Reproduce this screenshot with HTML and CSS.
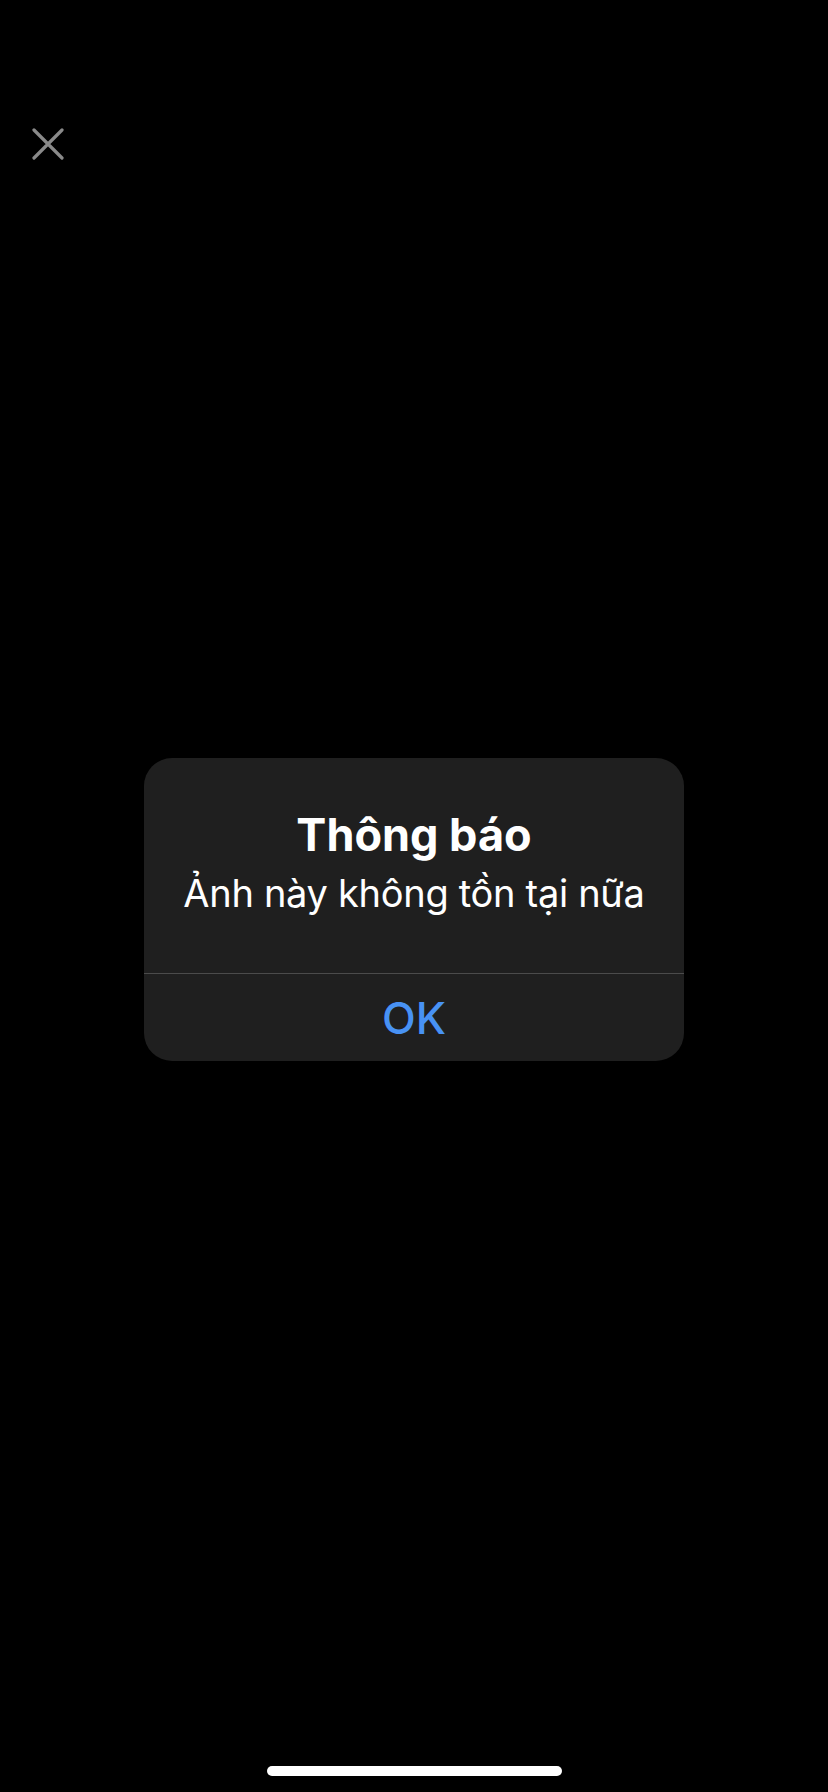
FILE: index.html
```html
<!DOCTYPE html>
<html lang="vi">
<head>
<meta charset="utf-8">
<title>Thông báo</title>
<link rel="stylesheet" href="styles.css">
</head>
<body>
<div class="screen">
  <div class="topbar">
    <button class="close" aria-label="Đóng">
      <svg width="32" height="32" viewBox="0 0 32 32">
        <path d="M2 2 L30 30 M30 2 L2 30" stroke="#8a8a8a" stroke-width="3.2" stroke-linecap="round" fill="none"/>
      </svg>
    </button>
  </div>
  <div class="alert">
    <div class="alert-body">
      <div class="alert-title">Thông báo</div>
      <div class="alert-message">Ảnh này không tồn tại nữa</div>
    </div>
    <div class="alert-actions">
      <button class="alert-btn">OK</button>
    </div>
  </div>
  <div class="home-indicator"></div>
</div>
</body>
</html>
```
FILE: styles.css
```css
html, body {
  margin: 0;
  padding: 0;
  background: #000;
}
body {
  font-family: Inter, "Noto Sans", "Liberation Sans", sans-serif;
  color: #fff;
}
.screen {
  width: 828px;
  height: 1792px;
  display: flex;
  flex-direction: column;
  align-items: center;
  box-sizing: border-box;
  padding-bottom: 16px;
}
.topbar {
  align-self: stretch;
  padding: 128px 0 0 32px;
  height: 32px;
}
.close {
  display: block;
  width: 32px;
  height: 32px;
  padding: 0;
  border: 0;
  background: none;
}
.close svg { display: block; }
.alert {
  margin-top: 598px;
  width: 540px;
  background: #1f1f1f;
  border-radius: 28px;
  overflow: hidden;
  text-align: center;
}
.alert-body {
  padding: 51px 20px 56px;
}
.alert-title {
  font-size: 45px;
  line-height: 52px;
  font-weight: 700;
  letter-spacing: 0;
}
.alert-message {
  margin-top: 8px;
  font-size: 38px;
  line-height: 48px;
  font-weight: 400;
  letter-spacing: -0.3px;
}
.alert-actions {
  border-top: 1px solid #4b4b4b;
}
.alert-btn {
  display: block;
  width: 100%;
  height: 87px;
  padding: 2px 0 0;
  border: 0;
  background: none;
  font-family: Inter, "Noto Sans", "Liberation Sans", sans-serif;
  font-size: 44px;
  line-height: 85px;
  color: #4892f4;
  font-weight: 500;
}
.home-indicator {
  margin-top: auto;
  width: 295px;
  height: 10px;
  border-radius: 5px;
  background: #fff;
}
```
